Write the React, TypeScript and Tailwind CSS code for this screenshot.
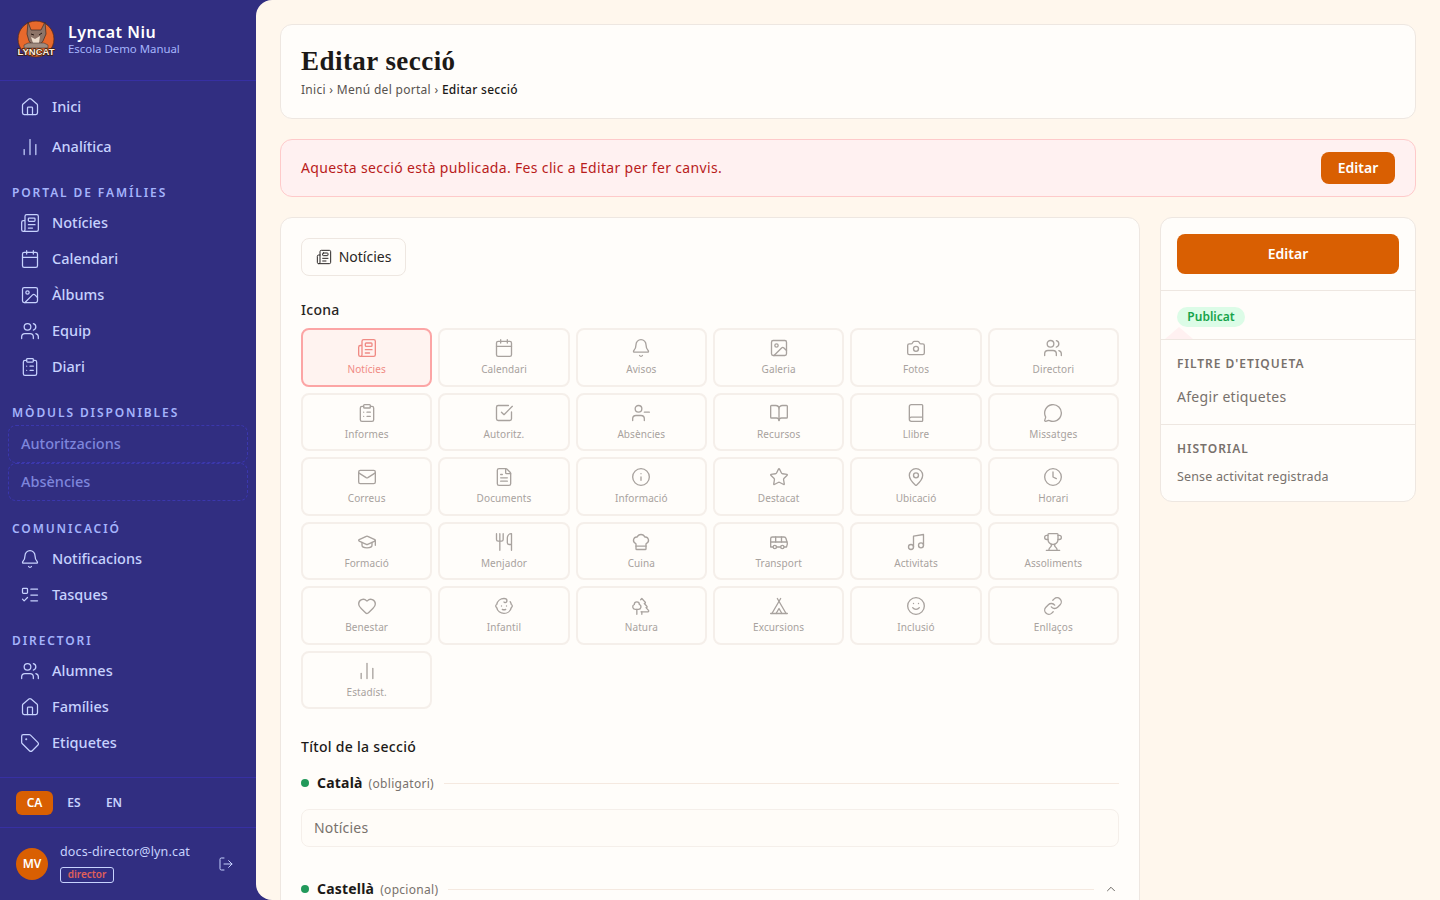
import {
  Baby, Bell, Book, BookOpen, Bus, Calendar, Camera, ChartNoAxesColumn, ChefHat, ChevronUp, ClipboardList,
  Clock, FileText, GraduationCap, Heart, House, Image, Info, Link, ListTodo, LogOut, Mail, MapPin, MessageCircle,
  Music, Newspaper, Smile, SquareCheckBig, Star, Tag, Tent, Trees, Trophy, UserMinus, Users, Utensils,
} from "lucide-react";
import type { LucideIcon } from "lucide-react";

const font = { fontFamily: '"Noto Sans", sans-serif' };

const portal: [LucideIcon, string][] = [
  [Newspaper, "Notícies"],
  [Calendar, "Calendari"],
  [Image, "Àlbums"],
  [Users, "Equip"],
  [ClipboardList, "Diari"],
];
const comms: [LucideIcon, string][] = [
  [Bell, "Notificacions"],
  [ListTodo, "Tasques"],
];
const directory: [LucideIcon, string][] = [
  [Users, "Alumnes"],
  [House, "Famílies"],
  [Tag, "Etiquetes"],
];

const icons: [LucideIcon, string][] = [
  [Newspaper, "Notícies"],
  [Calendar, "Calendari"],
  [Bell, "Avisos"],
  [Image, "Galeria"],
  [Camera, "Fotos"],
  [Users, "Directori"],
  [ClipboardList, "Informes"],
  [SquareCheckBig, "Autoritz."],
  [UserMinus, "Absències"],
  [BookOpen, "Recursos"],
  [Book, "Llibre"],
  [MessageCircle, "Missatges"],
  [Mail, "Correus"],
  [FileText, "Documents"],
  [Info, "Informació"],
  [Star, "Destacat"],
  [MapPin, "Ubicació"],
  [Clock, "Horari"],
  [GraduationCap, "Formació"],
  [Utensils, "Menjador"],
  [ChefHat, "Cuina"],
  [Bus, "Transport"],
  [Music, "Activitats"],
  [Trophy, "Assoliments"],
  [Heart, "Benestar"],
  [Baby, "Infantil"],
  [Trees, "Natura"],
  [Tent, "Excursions"],
  [Smile, "Inclusió"],
  [Link, "Enllaços"],
  [ChartNoAxesColumn, "Estadíst."],
];

function Logo() {
  return (
    <svg viewBox="0 0 40 40" className="w-10 h-10 shrink-0">
      <circle cx="20" cy="19" r="18" fill="#e8692c" stroke="#5a2a14" strokeWidth="0.8" />
      <path d="M12 2l3 8h10l4-8 1 12-3 7-4 5h-6l-4-5-2-7z" fill="#8d7468" stroke="#3b2a25" strokeWidth="0.7" />
      <path d="M15 17l4 2 5-3-1 7-3 3-3-3z" fill="#ecdccb" />
      <path d="M15 14l3 1M23 15l3-2" stroke="#2a1a14" strokeWidth="1" />
      <path d="M8 25l4-2h16l4 2v3H8z" fill="#a08c80" stroke="#3b2a25" strokeWidth="0.5" />
      <text
        x="20"
        y="35"
        textAnchor="middle"
        fontSize="9.5"
        fontWeight="700"
        fill="#fdeedd"
        stroke="#3b1d10"
        strokeWidth="1.4"
        paintOrder="stroke"
        textLength="37"
        lengthAdjust="spacingAndGlyphs"
        style={{ fontFamily: '"Liberation Sans", sans-serif' }}
      >
        LYNCAT
      </text>
    </svg>
  );
}

function NavItem({ icon: Icon, label, tall }: { icon: LucideIcon; label: string; tall?: boolean }) {
  return (
    <div className={`flex items-center gap-[12px] pl-[20px] text-[14.5px] font-medium text-[#c7d2fe] ${tall ? "h-[40px]" : "h-[36px]"}`}>
      <Icon size={20} strokeWidth={1.5} className="shrink-0" />
      <span>{label}</span>
    </div>
  );
}

function NavLabel({ children }: { children: string }) {
  return (
    <div className="pl-[12px] text-[12px] font-semibold leading-[16px] tracking-[1.9px] text-[#a5b4fc] uppercase">{children}</div>
  );
}

function Sidebar() {
  return (
    <aside className="w-[272px] -mr-[16px] h-full shrink-0 flex flex-col bg-[#312e81] pr-[16px]">
      <div className="h-[81px] shrink-0 flex items-center gap-[12px] pl-[16px] border-b border-[#3730a3]">
        <Logo />
        <div className="pb-[2px]">
          <div className="text-[16px] leading-[19px] font-semibold tracking-[0.5px] text-white">Lyncat Niu</div>
          <div className="text-[11.4px] leading-[13px] text-[#a5b4fc]">Escola Demo Manual</div>
        </div>
      </div>
      <nav className="flex-1 min-h-0 overflow-hidden pt-[6px]">
        <NavItem icon={House} label="Inici" tall />
        <NavItem icon={ChartNoAxesColumn} label="Analítica" tall />
        <div className="mt-[18px] mb-[4px]">
          <NavLabel>Portal de famílies</NavLabel>
        </div>
        {portal.map(([icon, label]) => (
          <NavItem key={label} icon={icon} label={label} />
        ))}
        <div className="mt-[20px] mb-[4px]">
          <NavLabel>Mòduls disponibles</NavLabel>
        </div>
        <div className="mx-[8px]">
          {["Autoritzacions", "Absències"].map((label) => (
            <div
              key={label}
              className="h-[38px] flex items-center pl-[12px] text-[14.5px] font-medium text-[#7e86dc] border border-dashed border-[#3b37ad] rounded-lg"
            >
              {label}
            </div>
          ))}
        </div>
        <div className="mt-[20px] mb-[4px]">
          <NavLabel>Comunicació</NavLabel>
        </div>
        {comms.map(([icon, label]) => (
          <NavItem key={label} icon={icon} label={label} />
        ))}
        <div className="mt-[20px] mb-[4px]">
          <NavLabel>Directori</NavLabel>
        </div>
        {directory.map(([icon, label]) => (
          <NavItem key={label} icon={icon} label={label} />
        ))}
      </nav>
      <div className="h-[50px] shrink-0 flex items-center pl-[16px] border-t border-[#3730a3] text-[12px] font-semibold text-[#c7d2fe]">
        <span className="w-[37px] h-[24px] flex items-center justify-center rounded-md bg-[#d95f02] text-white">CA</span>
        <span className="w-[42px] text-center">ES</span>
        <span className="w-[38px] text-center">EN</span>
      </div>
      <div className="h-[73px] shrink-0 flex items-center pl-[16px] border-t border-[#3730a3]">
        <div className="w-[32px] h-[32px] rounded-full bg-[#d95f02] flex items-center justify-center text-[12px] font-semibold text-white">
          MV
        </div>
        <div className="ml-[12px] pb-[2px]">
          <div className="text-[12.5px] leading-[16px] tracking-[0.15px] text-[#c7d2fe]">docs-director@lyn.cat</div>
          <span className="mt-[7px] block w-[54px] h-[16px] rounded-[3px] border border-[#c7d2fe] text-center text-[10px] leading-[13px] font-semibold text-[#e0605a]">
            director
          </span>
        </div>
        <LogOut size={16} strokeWidth={1.5} className="ml-[28px] text-[#c7d2fe]" />
      </div>
    </aside>
  );
}

function IconTile({ icon: Icon, label, active }: { icon: LucideIcon; label: string; active?: boolean }) {
  return (
    <div
      className={`h-[58.5px] rounded-lg border-2 flex flex-col items-center justify-center gap-[4px] ${
        active ? "border-[#fca5a5] bg-[#fff3f0] text-[#f08a84]" : "border-[#f5efea] text-[#a8a29e]"
      }`}
    >
      <Icon size={20} strokeWidth={1.6} />
      <span className="text-[10px] leading-[14px] tracking-[0.1px]">{label}</span>
    </div>
  );
}

function LangHeading({ name, note, chevron }: { name: string; note: string; chevron?: boolean }) {
  return (
    <div className="flex items-center">
      <span className="w-[8px] h-[8px] rounded-full bg-[#22995a]" />
      <span className="ml-[8px] text-[14px] leading-[20px] font-bold tracking-[0.2px] text-[#1c1917]">{name}</span>
      <span className="ml-[6px] pt-px text-[12px] tracking-[0.3px] text-[#78716c]">{note}</span>
      <div className="ml-[10px] flex-1 h-px bg-[#f5e9e0]" />
      {chevron && <ChevronUp size={14} strokeWidth={1.5} className="ml-[10px] mr-[1px] text-[#57534e]" />}
    </div>
  );
}

function Main() {
  return (
    <main className="flex-1 min-w-0 h-full overflow-hidden bg-[#fff7ed] rounded-l-2xl px-[24px] pt-[24px] relative z-10">
      <div className="h-[95px] rounded-xl border border-[#eee7e1] bg-[#fffdfa] pl-[20px] pt-[20px]">
        <h1 className="text-[27px] leading-[32px] font-bold tracking-[0.45px] text-[#1c1917]" style={{ fontFamily: '"Liberation Serif", serif' }}>
          Editar secció
        </h1>
        <div className="mt-[5px] text-[12px] leading-[16px] tracking-[0.3px] text-[#57534e]">
          Inici › Menú del portal › <span className="font-medium text-[#1c1917]">Editar secció</span>
        </div>
      </div>

      <div className="mt-[20px] h-[58px] rounded-xl border border-[#fecaca] bg-[#fff1f1] flex items-center justify-between pl-[20px] pr-[20px]">
        <span className="-mt-[2px] text-[14px] tracking-[0.33px] text-[#b91c1c]">Aquesta secció està publicada. Fes clic a Editar per fer canvis.</span>
        <button className="w-[74px] h-[32px] pb-[2px] rounded-lg bg-[#d95f02] text-[14px] font-semibold text-white">Editar</button>
      </div>

      <div className="mt-[20px] flex items-start gap-[20px]">
        <section className="w-[860px] shrink-0 rounded-xl border border-[#eee7e1] bg-[#fffdfa] px-[20px] pt-[20px] pb-[40px]">
          <div className="w-[105px] h-[38px] pb-[1px] rounded-lg border border-[#eee7e1] flex items-center justify-center gap-[7px] text-[14px] text-[#292524]">
            <Newspaper size={16} strokeWidth={1.5} />
            Notícies
          </div>
          <div className="mt-[24px] text-[14px] leading-[20px] font-medium tracking-[0.3px] text-[#292524]">Icona</div>
          <div className="mt-[8px] grid grid-cols-6 gap-[6px]">
            {icons.map(([icon, label], i) => (
              <IconTile key={label} icon={icon} label={label} active={i === 0} />
            ))}
          </div>
          <div className="mt-[28px] text-[14px] leading-[20px] font-medium tracking-[0.3px] text-[#1c1917]">Títol de la secció</div>
          <div className="mt-[16px]">
            <LangHeading name="Català" note="(obligatori)" />
          </div>
          <div className="mt-[16px] h-[38px] pb-[2px] rounded-lg border border-[#f5efea] bg-[#fffcf8] flex items-center pl-[12px] text-[14px] tracking-[0.2px] text-[#78716c]">
            Notícies
          </div>
          <div className="mt-[32px]">
            <LangHeading name="Castellà" note="(opcional)" chevron />
          </div>
        </section>

        <aside className="relative w-[256px] shrink-0 rounded-xl border border-[#eee7e1] bg-[#fffdfa]">
          <div className="h-[73px] px-[16px] pt-[16px] border-b border-[#eee7e1]">
            <button className="w-full h-[40px] pb-[2px] rounded-lg bg-[#d95f02] text-[14px] font-semibold text-white">Editar</button>
          </div>
          <div className="relative h-[49px] px-[16px] pt-[16px] border-b border-[#eee7e1] overflow-hidden">
            <svg viewBox="0 0 28 12" className="absolute left-[4px] bottom-0 w-[28px] h-[12px]">
              <path d="M14 0l14 12H0z" fill="#fff1f1" />
            </svg>
            <span className="relative block w-[68px] h-[20px] text-center rounded-full bg-[#dcfce7] text-[12px] leading-[19px] font-semibold text-[#16a34a]">
              Publicat
            </span>
          </div>
          <div className="h-[85px] px-[16px] pt-[16px] border-b border-[#eee7e1]">
            <div className="text-[12px] leading-[16px] font-semibold tracking-[1px] text-[#78716c] uppercase">Filtre d'etiqueta</div>
            <div className="mt-[15px] text-[14px] leading-[20px] tracking-[0.3px] text-[#78716c]">Afegir etiquetes</div>
          </div>
          <div className="h-[76px] px-[16px] pt-[16px]">
            <div className="text-[12px] leading-[16px] font-semibold tracking-[1px] text-[#78716c] uppercase">Historial</div>
            <div className="mt-[12px] text-[12.5px] leading-[16px] tracking-[0.16px] text-[#78716c]">Sense activitat registrada</div>
          </div>
        </aside>
      </div>
    </main>
  );
}

export default function App() {
  return (
    <div className="flex h-screen w-full overflow-hidden bg-[#312e81]" style={font}>
      <Sidebar />
      <Main />
    </div>
  );
}
